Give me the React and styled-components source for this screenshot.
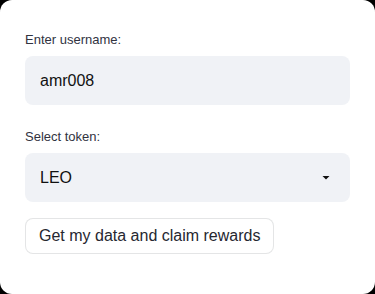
import React from "react";
import styled, { createGlobalStyle } from "styled-components";

const GlobalStyle = createGlobalStyle`
  html, body {
    margin: 0;
    padding: 0;
    background: #000;
  }
  * {
    box-sizing: border-box;
  }
`;

const Card = styled.div`
  height: 294px;
  background: #ffffff;
  border-radius: 12px;
  padding: 29px 25px 0 25px;
  display: flex;
  flex-direction: column;
  font-family: "Liberation Sans", Arial, sans-serif;
  color: #31333f;
`;

const Field = styled.div`
  display: flex;
  flex-direction: column;
  margin-bottom: ${(p) => p.gap || 0}px;
`;

const Label = styled.label`
  font-size: 13px;
  line-height: 21px;
  margin-bottom: 6px;
  color: #31333f;
`;

const TextInput = styled.input`
  height: 49px;
  border: none;
  outline: none;
  border-radius: 8px;
  background: #f0f2f6;
  padding: 0 15px;
  font-family: inherit;
  font-size: 16px;
  color: #111111;
`;

const SelectBox = styled.div`
  height: 49px;
  border-radius: 8px;
  background: #f0f2f6;
  padding: 0 19px 0 15px;
  display: flex;
  align-items: center;
  justify-content: space-between;
  font-size: 16px;
  color: #111111;
`;

const Button = styled.button`
  align-self: flex-start;
  height: 36px;
  padding: 0 13px;
  background: #ffffff;
  border: 1px solid rgba(49, 51, 63, 0.13);
  border-radius: 8px;
  font-family: inherit;
  font-size: 16px;
  color: #262730;
`;

const Caret = () => (
  <svg width="10" height="6" viewBox="0 0 10 6">
    <path d="M1.5 1h7L5 4.5z" fill="#111111" />
  </svg>
);

const App = () => {
  return (
    <>
      <GlobalStyle />
      <Card>
        <Field gap={21}>
          <Label>Enter username:</Label>
          <TextInput defaultValue="amr008" />
        </Field>
        <Field gap={16}>
          <Label>Select token:</Label>
          <SelectBox>
            <span>LEO</span>
            <Caret />
          </SelectBox>
        </Field>
        <Button>Get my data and claim rewards</Button>
      </Card>
    </>
  );
};

export default App;
